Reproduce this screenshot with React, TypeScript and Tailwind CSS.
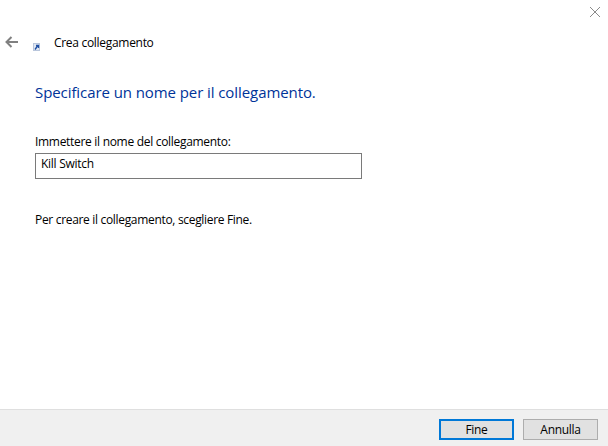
export default function App() {
  return (
    <div className="w-[608px] h-[446px] bg-white flex flex-col overflow-hidden font-['Open_Sans','Noto_Sans',sans-serif] text-[12px] text-[#000]">
      {/* titlebar */}
      <div className="h-[24px] flex justify-end items-start pt-[7px] pr-[8px]">
        <svg width="10" height="10" viewBox="0 0 10 10" className="text-[#8a8a8a]">
          <path d="M0 0L10 10M10 0L0 10" stroke="currentColor" strokeWidth="1" fill="none" />
        </svg>
      </div>

      {/* header */}
      <div className="h-[38px] flex items-start pt-[11px] pl-[5px]">
        <svg width="13" height="12" viewBox="0 0 13 12" className="mt-[1px] text-[#808080]">
          <path d="M6.5 1L1.5 6L6.5 11M1.5 6H13" stroke="currentColor" strokeWidth="2" fill="none" />
        </svg>
        <svg width="7" height="8" viewBox="0 0 7 8" className="ml-[15px] mt-[8px]">
          <rect width="7" height="8" fill="#b9c6dc" />
          <rect x="1" y="1" width="5" height="6" fill="#dfe6f1" />
          <path d="M2 6.5L4.5 3M3 2.5H5.5V5" stroke="#1f4fa3" strokeWidth="1.3" fill="none" />
        </svg>
        <span className="ml-[14px] leading-[16px] tracking-[-0.3px]">Crea collegamento</span>
      </div>

      {/* content */}
      <div className="flex-1 pl-[35px] pt-[20px]">
        <h1 className="text-[15px] leading-[20px] text-[#003399] font-normal tracking-[-0.08px]">
          Specificare un nome per il collegamento.
        </h1>
        <label className="block mt-[32px] leading-[16px] tracking-[-0.3px]">Immettere il nome del collegamento:</label>
        <div className="mt-[3px] w-[327px] h-[26px] border border-[#7a7a7a] pl-[5px] leading-[20px] tracking-[-0.28px]">
          Kill Switch
        </div>
        <p className="mt-[33px] leading-[16px] tracking-[-0.32px]">Per creare il collegamento, scegliere Fine.</p>
      </div>

      {/* footer */}
      <div className="h-[37px] bg-[#f0f0f0] border-t border-[#dfdfdf] flex justify-end items-start pt-[9px] pr-[10px] gap-[9px]">
        <button className="w-[75px] h-[21px] bg-[#e1e1e1] border-2 border-[#0078d7] flex items-center justify-center leading-none tracking-[-0.3px]">
          Fine
        </button>
        <button className="w-[75px] h-[21px] bg-[#e1e1e1] border border-[#adadad] flex items-center justify-center leading-none tracking-[-0.3px]">
          Annulla
        </button>
      </div>
    </div>
  );
}
